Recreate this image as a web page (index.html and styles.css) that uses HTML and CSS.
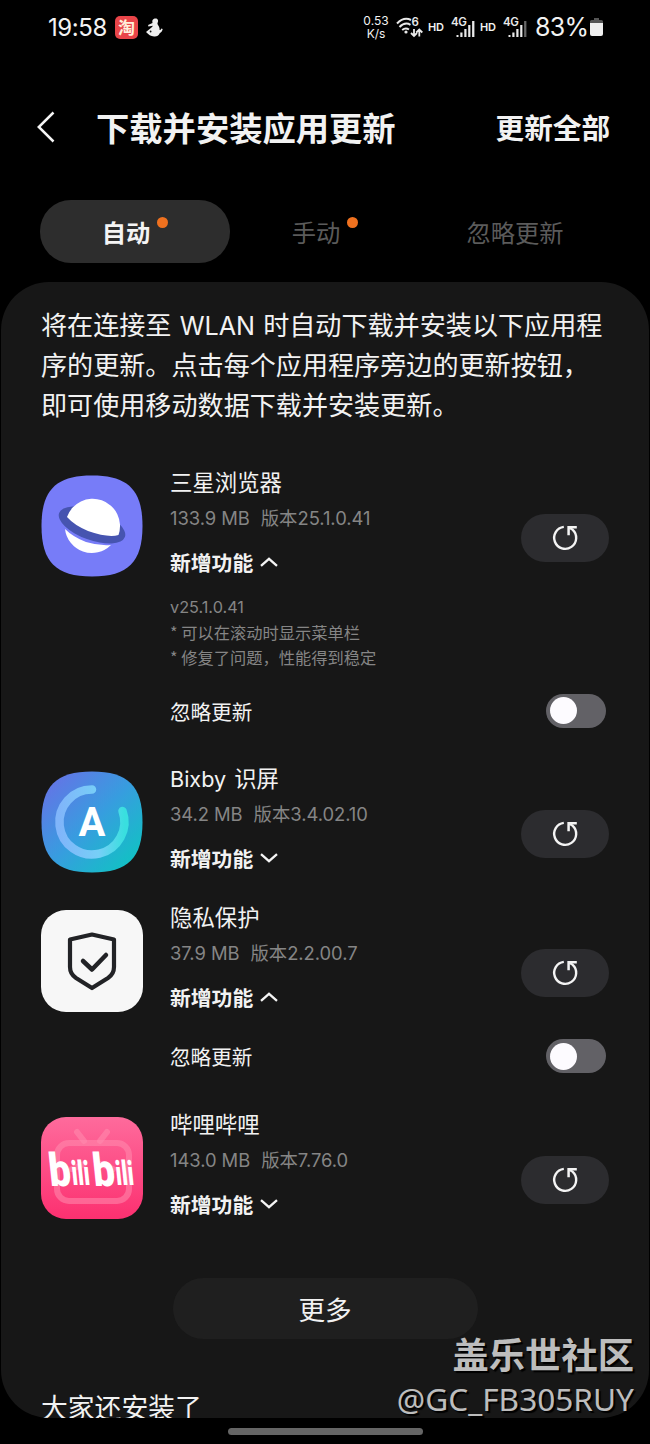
FILE: index.html
```html
<!DOCTYPE html>
<html lang="zh-CN">
<head>
<meta charset="utf-8">
<title>下载并安装应用更新</title>
<link rel="stylesheet" href="styles.css">
</head>
<body>
<svg class="defs" width="0" height="0" aria-hidden="true">
  <symbol id="refresh" viewBox="0 0 28 28"><path d="M12.800 2.900A11 11 0 1 0 21.500 5.600L18 3.400" fill="none" stroke="#f4f4f4" stroke-width="2.400"/><path d="M17.600 11.200V3.300h8.200" fill="none" stroke="#f4f4f4" stroke-width="2.500"/></symbol>
  <symbol id="up" viewBox="0 0 18 10"><path d="M1 8.800 9 1.800l8 7" fill="none" stroke="#f4f4f4" stroke-width="2.300"/></symbol>
  <symbol id="down" viewBox="0 0 18 10"><path d="M1 1.200 9 8.200l8-7" fill="none" stroke="#f4f4f4" stroke-width="2.300"/></symbol>
</svg>
<div class="screen">
  <header class="status">
    <span class="time">19:58</span>
    <span class="taobao">淘</span>
    <svg class="buddy" width="17" height="19" viewBox="0 0 17 19"><path d="M8 .8C11-.6 13 2 11.700 4.500c-.4.900-.3 1.500.3 2.400 1.200 1.700 1.700 3.400 1.600 5.200.9-.1 1.300-.6 1.700-1.600l1.400.6c-.4 2.500-1.600 3.500-3 4.200-1 2.700-3 3.200-5.300 3.100-3.800.1-5.600-1.700-8.400-4.400l5.500-4.400c.8-.7 1.300-1.300 1.400-1.800l-4.500.6-.3-1.500 4.400-2C6 3 6.400 1.500 8 .8z" fill="#eee"/><circle cx="4.600" cy="13.500" r=".9" fill="#111"/></svg>
    <div class="status-right">
      <span class="speed"><span>0.53</span><span>K/s</span></span>
      <svg class="wifi" width="27" height="21" viewBox="0 0 27 21"><g fill="none" stroke="#e9e9e9" stroke-width="2"><path d="M1 6.500Q8-.7 15 3M3.500 10Q9 4.500 14.500 7.800M6.200 13Q9.500 10.200 13 12.500"/><path d="M18 12v7m-3-3 3 3 3-3M23.300 19.500v-7m-3 3 3-3 3 3" stroke-width="1.800"/></g><circle cx="10" cy="15" r="1.600" fill="#e9e9e9"/><text x="15.500" y="9.300" class="glyph">6</text></svg>
      <span class="hd">HD</span>
      <svg class="sig" width="24" height="21" viewBox="0 0 24 21"><text x="0" y="8.500" class="glyph">4G</text><path d="M5.500 18h2v2h-2zM9.300 15.500h2.200V20H9.300zM13.300 12h2.200v8h-2.200zM17.200 8h2.200v12h-2.200zM21.100 4h2.300v16h-2.300z" fill="#e9e9e9"/></svg>
      <span class="hd">HD</span>
      <svg class="sig" width="24" height="21" viewBox="0 0 24 21"><text x="0" y="8.500" class="glyph">4G</text><path d="M5.500 18h2v2h-2zM9.300 15.500h2.200V20H9.300zM13.300 12h2.200v8h-2.200zM17.200 8h2.200v12h-2.200z" fill="#e9e9e9"/><path d="M21.100 4h2.300v16h-2.300z" fill="#666"/></svg>
      <span class="percent">83%</span>
      <svg class="battery" width="13" height="18" viewBox="0 0 13 18"><path d="M4 0h5v2h2.500Q13 2 13 3.500V7H0V3.500Q0 2 1.500 2H4z" fill="#555"/><path d="M0 5h13v11q0 2-2 2H2q-2 0-2-2z" fill="#efefef"/></svg>
    </div>
  </header>

  <div class="titlebar">
    <svg width="18" height="32" viewBox="0 0 18 32"><path d="M16.500 1.500 1.800 16l14.700 14.500" fill="none" stroke="#f5f5f5" stroke-width="2.500"/></svg>
    <h1>下载并安装应用更新</h1>
    <span class="all">更新全部</span>
  </div>

  <nav class="tabs">
    <div class="tab active">自动<i></i></div>
    <div class="tab">手动<i></i></div>
    <div class="tab">忽略更新</div>
  </nav>

  <main class="card">
    <p class="intro">将在连接至 <span class="latin">WLAN</span> 时自动下载并安装以下应用程<br>序的更新。点击每个应用程序旁边的更新按钮，<br>即可使用移动数据下载并安装更新。</p>

    <section class="app">
      <svg class="icon" width="102" height="102" viewBox="0 0 102 102">
        <path d="M51 .5C87 .5 101.500 15 101.500 51S87 101.500 51 101.500.500 87 .500 51 15 .5 51 .5z" fill="#777cf8"/>
        <ellipse cx="51" cy="50" rx="35" ry="15" transform="rotate(20 51 50)" fill="#4654b0"/>
        <path d="M26 42A27 27 0 1 1 77.500 60Q67 63 47 56 33 50 26 42z" fill="#fff"/>
        <path d="M24 54A27 27 0 0 0 70 70Q58 71 45 67 32 62 24 54z" fill="#fff"/>
      </svg>
      <div class="info">
        <h2>三星浏览器</h2>
        <div class="meta"><span>133.9 MB</span><span>版本<b>25.1.0.41</b></span></div>
        <div class="new">新增功能<svg width="18" height="10"><use href="#up"/></svg></div>
      </div>
      <button class="refresh"><svg width="28" height="28"><use href="#refresh"/></svg></button>
      <p class="notes"><b>v25.1.0.41</b><br>* 可以在滚动时显示菜单栏<br>* 修复了问题，性能得到稳定</p>
      <div class="ignore">忽略更新<span class="switch"></span></div>
    </section>

    <section class="app">
      <svg class="icon" width="102" height="102" viewBox="0 0 102 102">
        <defs><linearGradient id="bx" x1="0" y1="0" x2="1" y2="1"><stop offset=".08" stop-color="#6474e6"/><stop offset=".5" stop-color="#379ddf"/><stop offset=".9" stop-color="#12c1c4"/></linearGradient>
        <linearGradient id="ring" x1="0" y1="0" x2="1" y2="0"><stop offset="0" stop-color="#80b5fa"/><stop offset=".6" stop-color="#77cff7"/><stop offset="1" stop-color="#39dfdf"/></linearGradient></defs>
        <path d="M51 .5C87 .5 101.500 15 101.500 51S87 101.500 51 101.500.500 87 .500 51 15 .5 51 .5z" fill="url(#bx)"/>
        <path d="M51 18.500A32.500 32.500 0 1 0 81.500 40" fill="none" stroke="url(#ring)" stroke-width="8.500" stroke-linecap="round"/>
        <text x="51" y="64.500" text-anchor="middle" class="letter">A</text>
      </svg>
      <div class="info">
        <h2><span class="latin">Bixby</span> 识屏</h2>
        <div class="meta"><span>34.2 MB</span><span>版本<b>3.4.02.10</b></span></div>
        <div class="new">新增功能<svg width="18" height="10"><use href="#down"/></svg></div>
      </div>
      <button class="refresh"><svg width="28" height="28"><use href="#refresh"/></svg></button>
    </section>

    <section class="app">
      <svg class="icon" width="102" height="102" viewBox="0 0 102 102">
        <rect width="102" height="102" rx="25" fill="#f7f7f7"/>
        <path d="M51 24.500 73 29.500V57Q73 64 67 68L51 78 35 68Q29 64 29 57V29.500z" fill="none" stroke="#222326" stroke-width="4.200" stroke-linejoin="round"/>
        <path d="m42 51 9 8.500 14-14.500" fill="none" stroke="#222326" stroke-width="4.500" stroke-linecap="round" stroke-linejoin="round"/>
      </svg>
      <div class="info">
        <h2>隐私保护</h2>
        <div class="meta"><span>37.9 MB</span><span>版本<b>2.2.00.7</b></span></div>
        <div class="new">新增功能<svg width="18" height="10"><use href="#up"/></svg></div>
      </div>
      <button class="refresh"><svg width="28" height="28"><use href="#refresh"/></svg></button>
      <div class="ignore">忽略更新<span class="switch"></span></div>
    </section>

    <section class="app">
      <svg class="icon" width="102" height="102" viewBox="0 0 102 102">
        <defs><linearGradient id="bl" x1="0" y1="0" x2="0" y2="1"><stop offset="0" stop-color="#fe6b9c"/><stop offset="1" stop-color="#fc3070"/></linearGradient></defs>
        <rect width="102" height="102" rx="25" fill="url(#bl)"/>
        <g fill="none" stroke="#ff8caf" stroke-opacity=".55" stroke-width="6" stroke-linecap="round"><rect x="16" y="26" width="72" height="58" rx="12"/><path d="m36 15 7 9M66 15l-7 9M31 52l12-5M60 47l12 5"/></g>
        <g transform="skewX(6)">
          <text x="2" y="69" class="logo" textLength="22" lengthAdjust="spacingAndGlyphs">b</text>
          <text x="24.500" y="68" class="logo small" textLength="18" lengthAdjust="spacingAndGlyphs">ili</text>
          <text x="46" y="69" class="logo" textLength="22" lengthAdjust="spacingAndGlyphs">b</text>
          <text x="68.500" y="68" class="logo small" textLength="18" lengthAdjust="spacingAndGlyphs">ili</text>
        </g>
      </svg>
      <div class="info">
        <h2>哔哩哔哩</h2>
        <div class="meta"><span>143.0 MB</span><span>版本<b>7.76.0</b></span></div>
        <div class="new">新增功能<svg width="18" height="10"><use href="#down"/></svg></div>
      </div>
      <button class="refresh"><svg width="28" height="28"><use href="#refresh"/></svg></button>
    </section>

    <button class="more">更多</button>
    <h3>大家还安装了</h3>
  </main>
  <div class="home"></div>
  <div class="watermark"><strong>盖乐世社区</strong><span>@GC_FB305RUY</span></div>
</div>
</body>
</html>
```

FILE: styles.css
```css
* { box-sizing: border-box; }
body { margin: 0; background: #000; color: #f2f2f2; font-family: "Noto Sans CJK SC", sans-serif; }
h1, h2, h3, p { margin: 0; font-weight: 400; }
button { border: 0; padding: 0; color: inherit; font: inherit; }
svg { display: block; flex: none; overflow: visible; }
.defs { position: absolute; }
.screen { position: relative; width: 650px; height: 1444px; overflow: hidden; background: #000; }

.status { display: flex; align-items: center; height: 54px; padding: 0 47px 0 48px; font-family: Inter, sans-serif; white-space: nowrap; }
.time { width: 59px; font-size: 24px; letter-spacing: -0.4px; }
.taobao { width: 23px; height: 23px; margin-left: 8px; border-radius: 5px; background: #e94549; color: #fff0dc; font: 700 17px/22px "Noto Sans CJK SC", sans-serif; text-align: center; }
.buddy { margin-left: 8px; }
.status-right { display: flex; align-items: center; margin-left: auto; }
.speed { display: flex; flex-direction: column; align-items: center; width: 28px; font-size: 12px; line-height: 13px; }
.wifi { margin-left: 6px; }
.glyph { font: 600 11.5px Inter, sans-serif; fill: #e9e9e9; letter-spacing: -0.5px; }
.hd { width: 17px; margin-left: 5px; font-size: 11px; font-weight: 600; letter-spacing: -0.2px; }
.sig { margin-left: 6px; }
.percent { width: 51px; margin-left: 8px; font-size: 25px; letter-spacing: -0.7px; }
.battery { margin-left: 4px; }

.titlebar { display: flex; align-items: center; height: 146px; padding: 0 40px 1px 37px; }
.titlebar h1 { margin-left: 41px; font-size: 33.3px; font-weight: 700; line-height: 48px; }
.titlebar .all { margin-left: auto; font-size: 28.6px; font-weight: 700; }

.tabs { display: grid; grid-template-columns: repeat(3, 190px); height: 62px; margin: 0 40px; }
.tab { display: flex; align-items: center; justify-content: center; border-radius: 31px; color: #5b5b5b; font-size: 24.3px; line-height: 62px; padding-top: 1px; }
.tab.active { background: #2d2d2d; color: #f4f4f4; font-weight: 700; }
.tab i { width: 11px; height: 11px; margin: -19px 0 0 7px; border-radius: 50%; background: #ef711f; }

.card { height: 1136px; margin: 20px 1px 0; padding: 22px 40px 0; overflow: hidden; border-radius: 48px; background: #171717; }
.intro { height: 163px; font-size: 26.1px; line-height: 40px; white-space: nowrap; }
.latin { font-family: Inter, sans-serif; font-size: .965em; line-height: 1; }
.intro .latin { margin: 0 2.3px; }
.app { display: grid; grid-template-columns: 129px 1fr 88px; margin-bottom: 21px; }
.icon { margin: 8px 0 0 -.5px; }
.info { height: 118px; white-space: nowrap; }
.info h2 { height: 30px; font-size: 22.4px; line-height: 28px; }
.info h2 .latin { margin-right: 3px; }
.meta { display: flex; gap: 11px; height: 42px; color: #858585; font: 18.4px/42px Inter, "Noto Sans CJK SC", sans-serif; letter-spacing: -.05px; }
.meta b, .notes b { font-weight: 400; font-family: Inter, sans-serif; }
.new { display: flex; align-items: center; gap: 7px; height: 46px; font-size: 20.8px; font-weight: 700; }
.refresh { display: grid; place-items: center; width: 88px; height: 48px; margin-top: 47px; border-radius: 24px; background: #2c2c2f; }
.notes { grid-column: 2 / 4; padding-top: 9px; color: #858585; font-size: 16.25px; line-height: 25.1px; }
.ignore { grid-column: 2 / 4; display: flex; align-items: center; justify-content: space-between; height: 34px; margin: 19px 3px 15px 0; font-size: 20.6px; }
.notes + .ignore { margin: 23.7px 3px 14.5px 0; }
.switch { width: 60px; height: 34px; padding: 3.5px; border-radius: 17px; background: #626166; }
.switch::before { content: ""; display: block; width: 27px; height: 27px; border-radius: 50%; background: #fdfbff; }
.more { display: block; width: 305px; height: 61px; margin: 51px auto 0; border-radius: 31px; background: #1f1f1f; font-size: 26.6px; line-height: 61px; }
.card h3 { margin-top: 48px; font-size: 26.8px; line-height: 40px; }
.home { width: 195px; height: 7px; margin: 10px auto 0; border-radius: 4px; background: #656565; }
.watermark { position: absolute; right: 16px; top: 1330px; display: flex; flex-direction: column; align-items: flex-end; color: #bdbdbd; text-shadow: 2px 2px 1px #000; white-space: nowrap; }
.watermark strong { font-size: 36.3px; line-height: 46px; font-weight: 700; }
.watermark span { font: 31.6px/46px "Noto Sans", sans-serif; }
.letter { font: 700 40px Roboto, sans-serif; fill: #fff; }
.logo { font: 900 46px Roboto, sans-serif; fill: #fff; }
.logo.small { font-size: 34px; }
```
